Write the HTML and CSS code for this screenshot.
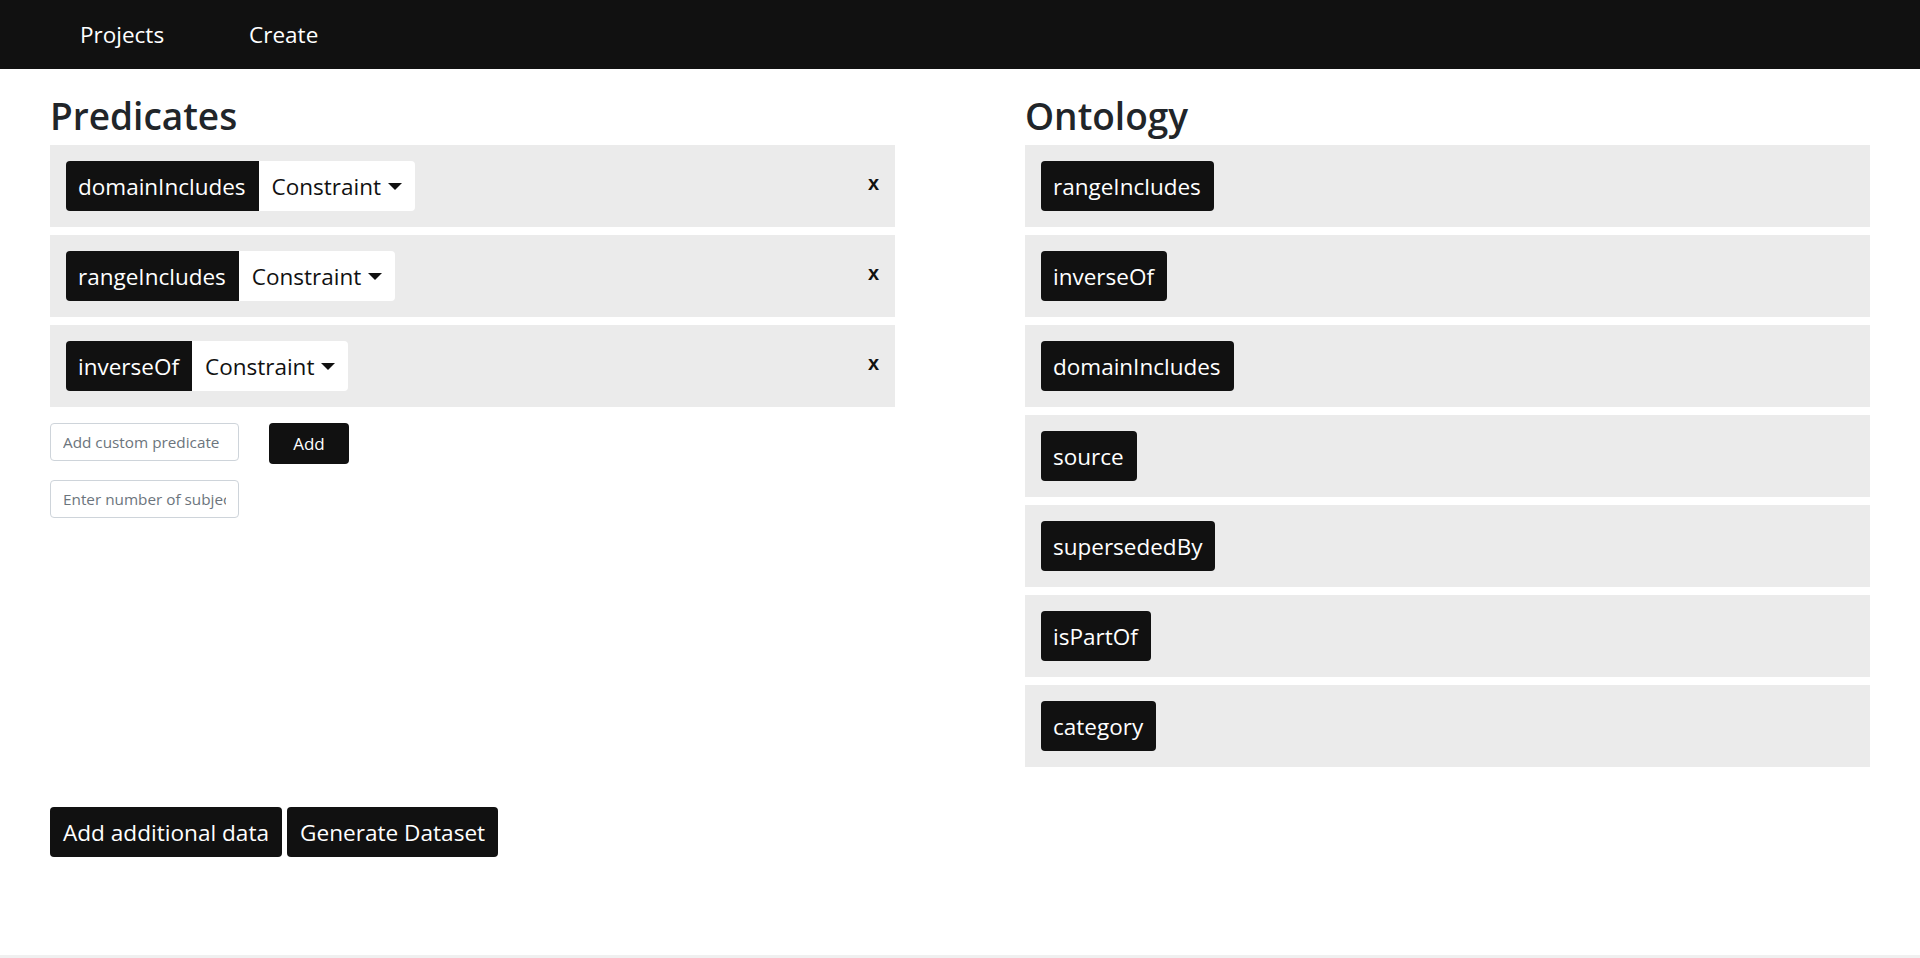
FILE: index.html
```html
<!DOCTYPE html>
<html lang="en">
<head>
<meta charset="utf-8">
<title>Predicates</title>
<link rel="stylesheet" href="styles.css">
</head>
<body>
<nav class="navbar">
  <a class="nav-link" href="#">Projects</a>
  <a class="nav-link" href="#">Create</a>
</nav>
<main class="page">
  <div class="columns">
    <section class="col">
      <h1 class="heading">Predicates</h1>
      <div class="list">
        <div class="row">
          <div class="group">
            <span class="badge">domainIncludes</span>
            <button class="dropdown">Constraint<span class="caret"></span></button>
          </div>
          <button class="close">x</button>
        </div>
        <div class="row">
          <div class="group">
            <span class="badge">rangeIncludes</span>
            <button class="dropdown">Constraint<span class="caret"></span></button>
          </div>
          <button class="close">x</button>
        </div>
        <div class="row">
          <div class="group">
            <span class="badge">inverseOf</span>
            <button class="dropdown">Constraint<span class="caret"></span></button>
          </div>
          <button class="close">x</button>
        </div>
      </div>
      <div class="form-line">
        <input class="field" type="text" placeholder="Add custom predicate">
        <button class="btn-small">Add</button>
      </div>
      <div class="form-line second">
        <input class="field" type="text" placeholder="Enter number of subjects">
      </div>
    </section>
    <section class="col">
      <h1 class="heading">Ontology</h1>
      <div class="list">
        <div class="row"><span class="badge">rangeIncludes</span></div>
        <div class="row"><span class="badge">inverseOf</span></div>
        <div class="row"><span class="badge">domainIncludes</span></div>
        <div class="row"><span class="badge">source</span></div>
        <div class="row"><span class="badge">supersededBy</span></div>
        <div class="row"><span class="badge">isPartOf</span></div>
        <div class="row"><span class="badge">category</span></div>
      </div>
    </section>
  </div>
  <div class="actions">
    <button class="btn-large">Add additional data</button>
    <button class="btn-large">Generate Dataset</button>
  </div>
</main>
<footer class="footer"></footer>
</body>
</html>
```

FILE: styles.css
```css
* { box-sizing: border-box; }

html, body {
  margin: 0;
  padding: 0;
}

body {
  font-family: "Open Sans", "Noto Sans", sans-serif;
  color: #212529;
  background: #fff;
  height: 958px;
  overflow: hidden;
}

.navbar {
  height: 69px;
  background: #111111;
  display: flex;
  align-items: center;
  padding-left: 80px;
  gap: 85px;
}

.nav-link {
  color: #fff;
  text-decoration: none;
  font-size: 22.5px;
  line-height: 1;
  padding-top: 1px;
}

.page {
  padding: 0 50px;
}

.columns {
  display: grid;
  grid-template-columns: 1fr 1fr;
  column-gap: 130px;
}

.heading {
  margin: 25px 0 7px;
  font-size: 37px;
  line-height: 44px;
  font-weight: 600;
  color: #212529;
}

.list {
  display: flex;
  flex-direction: column;
  gap: 8px;
}

.row {
  height: 82px;
  background: #ebebeb;
  padding: 16px;
  display: flex;
  align-items: flex-start;
  justify-content: space-between;
}

.group {
  display: flex;
}

.badge {
  display: inline-flex;
  align-items: center;
  height: 50px;
  padding: 1px 13px 0 12px;
  background: #111;
  color: #fff;
  font-size: 22.5px;
  border-radius: 4px;
  white-space: nowrap;
}

.group .badge {
  border-radius: 4px 0 0 4px;
}

.dropdown {
  display: inline-flex;
  align-items: center;
  height: 50px;
  padding: 1px 13px 0 13px;
  background: #fff;
  color: #111;
  border: none;
  border-radius: 0 4px 4px 0;
  font-family: inherit;
  font-size: 22.5px;
}

.caret {
  display: inline-block;
  margin-left: 7px;
  width: 0;
  height: 0;
  border-top: 7px solid #111;
  border-left: 7px solid transparent;
  border-right: 7px solid transparent;
}

.close {
  background: none;
  border: none;
  padding: 0;
  margin-top: 11px;
  margin-right: 0;
  font-family: "Liberation Sans", Arial, sans-serif;
  font-weight: 700;
  font-size: 20px;
  line-height: 22px;
  color: #111;
}

.form-line {
  display: flex;
  align-items: flex-start;
  gap: 30px;
  margin-top: 16px;
}

.form-line.second {
  margin-top: 16px;
}

.field {
  width: 189px;
  height: 38px;
  border: 1px solid #ced4da;
  border-radius: 4px;
  padding: 0 12px;
  font-family: inherit;
  font-size: 15.3px;
  color: #495057;
  background: #fff;
}

.field::placeholder {
  color: #6c757d;
}

.btn-small {
  width: 80px;
  height: 41px;
  background: #111;
  color: #fff;
  border: none;
  border-radius: 4px;
  font-family: inherit;
  font-size: 17px;
}

.actions {
  margin-top: 40px;
  display: flex;
  gap: 5px;
}

.btn-large {
  height: 50px;
  padding: 1px 13px 0;
  background: #111;
  color: #fff;
  border: none;
  border-radius: 4px;
  font-family: inherit;
  font-size: 22.6px;
}

.footer {
  margin-top: 98px;
  height: 3px;
  background: #f0f0f0;
}
```
